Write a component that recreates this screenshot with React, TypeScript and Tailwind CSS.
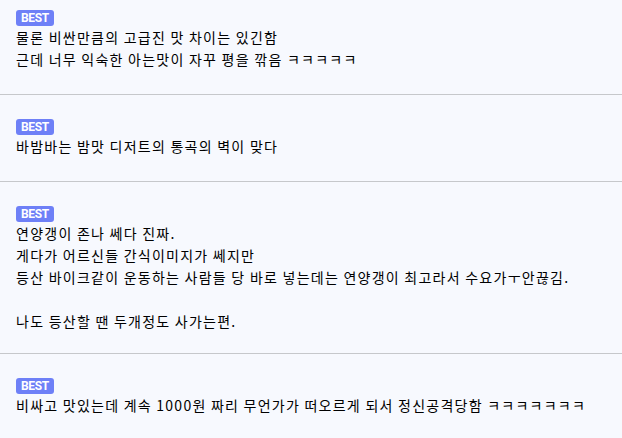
import React from "react";

type Item = { lines: string[]; pt: string; pb: string };

const items: Item[] = [
  {
    lines: ["물론 비싼만큼의 고급진 맛 차이는 있긴함", "근데 너무 익숙한 아는맛이 자꾸 평을 깎음 ㅋㅋㅋㅋㅋ"],
    pt: "pt-[10px]",
    pb: "pb-6",
  },
  { lines: ["바밤바는 밤맛 디저트의 통곡의 벽이 맞다"], pt: "pt-6", pb: "pb-6" },
  {
    lines: [
      "연양갱이 존나 쎄다 진짜.",
      "게다가 어르신들 간식이미지가 쎄지만",
      "등산 바이크같이 운동하는 사람들 당 바로 넣는데는 연양갱이 최고라서 수요가ㅜ안끊김.",
      "",
      "나도 등산할 땐 두개정도 사가는편.",
    ],
    pt: "pt-6",
    pb: "pb-[21px]",
  },
  {
    lines: ["비싸고 맛있는데 계속 1000원 짜리 무언가가 떠오르게 되서 정신공격당함 ㅋㅋㅋㅋㅋㅋㅋ"],
    pt: "pt-6",
    pb: "pb-6",
  },
];

export default function App() {
  return (
    <div
      className="w-[622px] h-[438px] overflow-hidden bg-[#f7f9fe] text-black"
      style={{ fontFamily: '"Noto Sans CJK KR", "Noto Sans", sans-serif' }}
    >
      {items.map((it, i) => (
        <div
          key={i}
          className={`px-4 ${it.pt} ${it.pb} ${i < items.length - 1 ? "border-b border-[#c6c8cb]" : ""}`}
        >
          <div className="flex">
            <span
              className="h-4 w-[38px] rounded-[3px] bg-[#6e80f7] text-white text-[12px] font-bold leading-4 text-center tracking-[-0.3px]"
              style={{ fontFamily: 'Roboto, "Liberation Sans", sans-serif' }}
            >
              BEST
            </span>
          </div>
          <div className="text-[14px] leading-[22px] tracking-[1.25px]">
            {it.lines.map((l, j) => (
              <div key={j} className="h-[22px] whitespace-nowrap">
                {l}
              </div>
            ))}
          </div>
        </div>
      ))}
    </div>
  );
}
